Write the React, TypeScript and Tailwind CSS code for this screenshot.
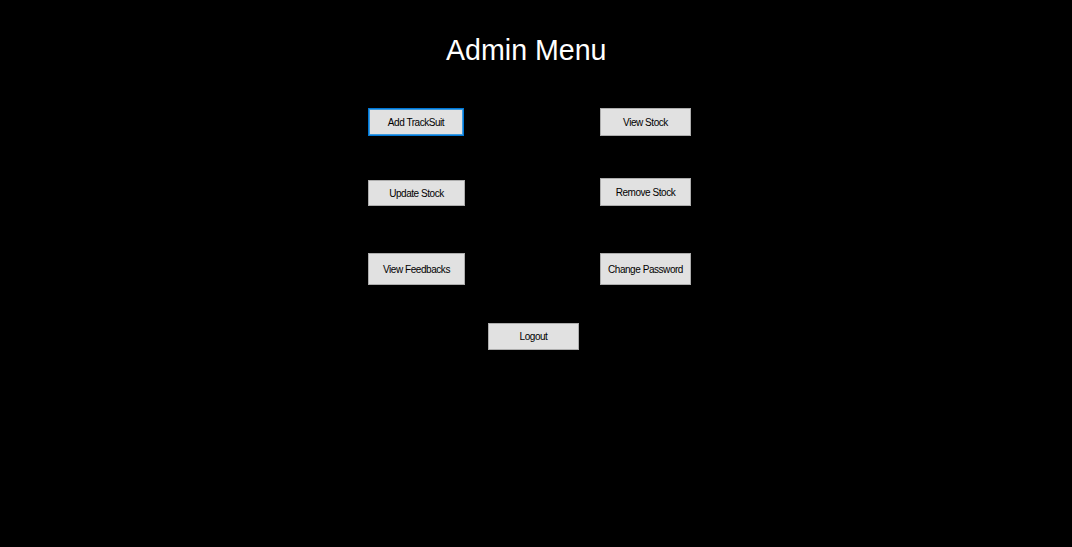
import React from "react";

const btn =
  "flex items-center justify-center pt-[1px] bg-[#e1e1e1] border border-[#adadad] text-black text-[10px] tracking-[-0.45px] leading-none";

export default function App() {
  return (
    <div
      className="w-[1072px] h-[547px] bg-black overflow-hidden flex flex-col"
      style={{ fontFamily: '"Liberation Sans", Arial, sans-serif' }}
    >
      <div className="mt-[34px] pl-[446px] text-white text-[28.6px] leading-[32px]">Admin Menu</div>

      <div className="flex items-start mt-[42px]">
        <div className="ml-[368px] w-[96px] h-[28px] flex items-center justify-center pt-[1px] bg-[#e1e1e1] border border-[#0078d7] shadow-[inset_0_0_0_1px_#3d9be0] text-black text-[10px] tracking-[-0.45px] leading-none">
          Add TrackSuit
        </div>
        <div className={`${btn} ml-[136px] w-[91px] h-[28px]`}>View Stock</div>
      </div>

      <div className="flex items-start mt-[42px]">
        <div className={`${btn} ml-[368px] w-[97px] h-[26px] mt-[2px]`}>Update Stock</div>
        <div className={`${btn} ml-[135px] w-[91px] h-[28px]`}>Remove Stock</div>
      </div>

      <div className="flex items-start mt-[47px]">
        <div className={`${btn} ml-[368px] w-[97px] h-[32px]`}>View Feedbacks</div>
        <div className={`${btn} ml-[135px] w-[91px] h-[32px]`}>Change Password</div>
      </div>

      <div className="flex items-start mt-[38px]">
        <div className={`${btn} ml-[488px] w-[91px] h-[27px]`}>Logout</div>
      </div>
    </div>
  );
}
